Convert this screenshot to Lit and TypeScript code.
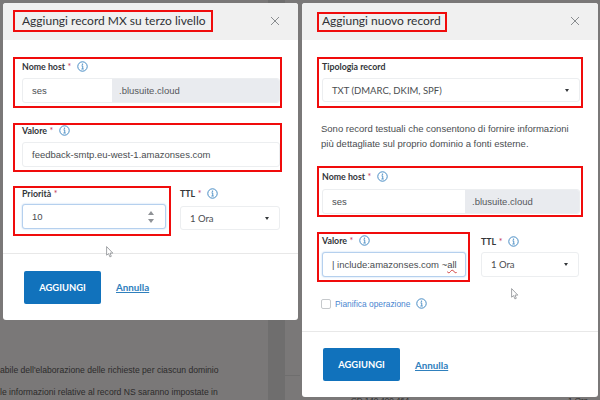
import { LitElement, html, css } from 'lit';
import { customElement } from 'lit/decorators.js';

const info = html`<svg class="info" viewBox="0 0 14 14" width="11" height="11">
  <circle cx="7" cy="7" r="6" fill="none" stroke="#3d85c0" stroke-width="1.2"></circle>
  <circle cx="7" cy="4" r="0.9" fill="#3d85c0"></circle>
  <path d="M5.7 6.2H7.3V10M5.6 10.2H8.6" fill="none" stroke="#3d85c0" stroke-width="1.1"></path>
</svg>`;

const close = html`<svg class="close" viewBox="0 0 10 10" width="10" height="10">
  <path d="M1 1L9 9M9 1L1 9" stroke="#8a8d90" stroke-width="1" fill="none"></path>
</svg>`;

const cursor = html`<svg viewBox="0 0 8 12" width="8" height="12">
  <path d="M.6.6V9.2L2.6 7.6L3.9 10.9L5.3 10.3L4 7.1H6.8Z" fill="#fff" stroke="#7b7e82" stroke-width=".7"></path>
</svg>`;

const AMP = html`<b>*</b>`;

@customElement('app-root')
export class AppRoot extends LitElement {
  static styles = css`
    :host {
      display: grid;
      grid-template-columns: 300px 300px;
      width: 600px;
      height: 400px;
      overflow: hidden;
      font-family: 'Liberation Sans', Arial, sans-serif;
      color: #3c3f42;
    }
    .shot {
      position: relative;
      height: 400px;
      overflow: hidden;
      background: #7a7878;
      box-sizing: border-box;
    }
    .left {
      padding: 3px 2px 0 3px;
    }
    .right {
      padding: 3px 2px 0 2px;
    }
    .band {
      position: absolute;
      top: 0;
      bottom: 0;
      left: 268px;
      width: 17px;
      background: #6f6e6e;
    }
    .rule {
      position: absolute;
      left: 285px;
      right: 0;
      top: 375px;
      height: 1px;
      background: #6f6e6e;
    }
    .modal {
      position: relative;
      background: #fff;
      border-radius: 3px;
      display: flex;
      flex-direction: column;
    }
    .left .modal {
      height: 317px;
    }
    .right .modal {
      height: 394px;
    }
    .head {
      height: 37px;
      flex: none;
      background: #f0f0f0;
      border-radius: 3px 3px 0 0;
      display: flex;
      align-items: flex-start;
      justify-content: space-between;
      padding-right: 18px;
      box-sizing: border-box;
    }
    .left .head {
      padding-left: 10px;
    }
    .right .head {
      padding-left: 15px;
    }
    .close {
      margin-top: 13px;
    }
    .title {
      font-family: Lato, sans-serif;
      font-size: 12px;
      color: #2f3236;
      border: 2px solid #f00c0c;
      box-sizing: border-box;
      white-space: nowrap;
    }
    .left .title {
      margin-top: 7px;
      height: 22px;
      line-height: 18px;
      width: 200px;
      padding-left: 7px;
    }
    .right .title {
      margin-top: 9px;
      height: 20px;
      line-height: 14px;
      padding: 0 4px 2px 3px;
    }
    .body {
      flex: 1;
      padding-top: 17px;
      display: flex;
      flex-direction: column;
      min-height: 0;
    }
    .left .body {
      padding-left: 10px;
      padding-right: 16px;
    }
    .right .body {
      padding-left: 15px;
      padding-right: 15px;
    }
    .mark {
      border: 2px solid #f00c0c;
      box-sizing: border-box;
      padding-bottom: 3px;
    }
    .left .mark {
      padding-left: 7px;
    }
    .right .mark {
      padding-left: 3px;
      padding-right: 1px;
    }
    .gap {
      margin-top: 15px;
    }
    label {
      display: flex;
      align-items: center;
      height: 10px;
      margin-bottom: 7px;
      font-family: Lato, sans-serif;
      font-weight: 700;
      font-size: 8.8px;
      color: #33363a;
      white-space: nowrap;
    }
    label b {
      color: #c4365a;
      font-weight: 400;
      margin-left: 2.5px;
    }
    label .info {
      margin-left: 6px;
    }
    .control {
      height: 25px;
      border: 1px solid #eceef0;
      border-radius: 3px;
      box-sizing: border-box;
      background: #fff;
      display: flex;
      align-items: center;
      font-size: 9.5px;
      color: #4a4d50;
      padding-left: 9px;
      white-space: nowrap;
      overflow: hidden;
    }
    .control.select {
      font-family: Lato, sans-serif;
      justify-content: space-between;
      padding-right: 10px;
    }
    .control.focus {
      border-color: #b5d0ee;
      box-shadow: 0 0 2px #b5d0ee;
    }
    .control.split {
      padding-left: 0;
    }
    .host {
      flex: none;
      padding-left: 9px;
      box-sizing: border-box;
    }
    .left .host {
      width: 89px;
    }
    .right .host {
      width: 142px;
    }
    .suffix {
      flex: 1;
      align-self: stretch;
      display: flex;
      align-items: center;
      background: #e9ebef;
      padding-left: 7px;
      color: #55585c;
    }
    .caret {
      width: 0;
      height: 0;
      border-left: 2.5px solid transparent;
      border-right: 2.5px solid transparent;
      border-top: 3px solid #33363a;
    }
    .spin {
      display: flex;
      flex-direction: column;
      gap: 4px;
      margin-right: 11px;
      margin-left: auto;
    }
    .spin i {
      width: 0;
      height: 0;
      border-left: 3px solid transparent;
      border-right: 3px solid transparent;
    }
    .spin i:first-child {
      border-bottom: 4px solid #8f9296;
    }
    .spin i:last-child {
      border-top: 4px solid #8f9296;
    }
    .row {
      display: flex;
      align-items: flex-start;
    }
    .left .first {
      padding-top: 2px;
    }
    .left .row {
      margin-top: 14px;
    }
    .left .row .mark {
      width: 158px;
      padding-right: 3px;
      padding-bottom: 5px;
    }
    .left .row .mark label {
      margin-bottom: 6px;
    }
    .ttl {
      flex: none;
    }
    .left .ttl {
      margin-left: 9px;
      width: 100px;
      padding-top: 2px;
    }
    .left .ttl label {
      margin-bottom: 8px;
    }
    .left .ttl .control {
      height: 24px;
    }
    .right .type {
      padding-top: 2px;
      padding-bottom: 4px;
    }
    .right .type .control {
      height: 24px;
    }
    .note {
      margin: 13px 0 15px 4px;
      font-size: 9.5px;
      line-height: 15px;
      color: #4a4d50;
      white-space: nowrap;
    }
    .right .host-field {
      padding-top: 3px;
      padding-bottom: 1px;
    }
    .right .host-field label {
      margin-bottom: 8px;
    }
    .right .row {
      margin-top: 15px;
    }
    .right .row .mark {
      width: 153px;
      padding-top: 1px;
      padding-right: 2px;
    }
    .right .ttl {
      margin-left: 11px;
      width: 98px;
      padding-top: 4px;
    }
    .right .ttl label {
      margin-bottom: 6px;
    }
    .check {
      display: flex;
      align-items: center;
      margin: 16px 0 0 4px;
      font-size: 8.4px;
      color: #4a86d0;
    }
    .box {
      width: 10px;
      height: 10px;
      box-sizing: border-box;
      border: 1px solid #c6c9cc;
      border-radius: 2px;
      margin-right: 4px;
    }
    .check .info {
      margin-left: 6px;
    }
    .foot {
      flex: none;
      height: 67px;
      box-sizing: border-box;
      border-top: 1px solid #e8e8e8;
      display: flex;
      align-items: center;
      gap: 15px;
      padding-left: 21px;
    }
    .right .foot {
      height: 66px;
    }
    .btn {
      width: 77px;
      height: 33px;
      background: #1172bc;
      border-radius: 2px;
      color: #fff;
      font-family: Lato, sans-serif;
      font-weight: 700;
      font-size: 9.4px;
      display: flex;
      align-items: center;
      justify-content: center;
    }
    .link {
      font-family: Lato, sans-serif;
      font-weight: 700;
      font-size: 9.8px;
      color: #2f80bd;
      text-decoration: underline;
    }
    .under {
      position: relative;
      font-size: 8.6px;
      color: #2c2b2b;
      white-space: nowrap;
      line-height: 12px;
      margin: 44px 0 0 -3px;
    }
    .under + .under {
      margin-top: 10px;
    }
    .pointer {
      position: absolute;
      line-height: 0;
    }
    .p1 {
      left: 106px;
      top: 246px;
    }
    .p2 {
      left: 211px;
      top: 288px;
    }
    .squiggle {
      text-decoration: underline wavy #d04040 1px;
    }
    .peek {
      position: relative;
      display: flex;
      justify-content: space-between;
      height: 12px;
      line-height: 10px;
      margin-top: -1px;
      padding: 0 10px 0 49px;
      font-size: 8px;
      color: #2c2b2b;
    }
  `;

  suffixField(host: string, cls: string) {
    return html`<div class="mark ${cls}">
      <label>Nome host ${AMP} ${info}</label>
      <div class="control split">
        <span class="host">${host}</span><span class="suffix">.blusuite.cloud</span>
      </div>
    </div>`;
  }

  footer() {
    return html`<div class="foot">
      <span class="btn">AGGIUNGI</span><span class="link">Annulla</span>
    </div>`;
  }

  render() {
    return html`
      <div class="shot left">
        <div class="band"></div>
        <div class="rule"></div>
        <div class="modal">
          <div class="head">
            <span class="title">Aggiungi record MX su terzo livello</span>${close}
          </div>
          <div class="body">
            ${this.suffixField('ses', 'first')}
            <div class="mark gap">
              <label>Valore ${AMP} ${info}</label>
              <div class="control">feedback-smtp.eu-west-1.amazonses.com</div>
            </div>
            <div class="row">
              <div class="mark">
                <label>Priorità ${AMP}</label>
                <div class="control focus">10<span class="spin"><i></i><i></i></span></div>
              </div>
              <div class="ttl">
                <label>TTL ${AMP} ${info}</label>
                <div class="control select">1 Ora<span class="caret"></span></div>
              </div>
            </div>
          </div>
          ${this.footer()}
        </div>
        <div class="under">abile dell'elaborazione delle richieste per ciascun dominio</div>
        <div class="under">le informazioni relative al record NS saranno impostate in</div>
        <div class="pointer p1">${cursor}</div>
      </div>
      <div class="shot right">
        <div class="modal">
          <div class="head">
            <span class="title">Aggiungi nuovo record</span>${close}
          </div>
          <div class="body">
            <div class="mark type">
              <label>Tipologia record</label>
              <div class="control select">TXT (DMARC, DKIM, SPF)<span class="caret"></span></div>
            </div>
            <div class="note">
              Sono record testuali che consentono di fornire informazioni<br />
              più dettagliate sul proprio dominio a fonti esterne.
            </div>
            ${this.suffixField('ses', 'host-field')}
            <div class="row">
              <div class="mark">
                <label>Valore ${AMP} ${info}</label>
                <div class="control focus">| include:amazonses.com ~<span class="squiggle">all</span></div>
              </div>
              <div class="ttl">
                <label>TTL ${AMP} ${info}</label>
                <div class="control select">1 Ora<span class="caret"></span></div>
              </div>
            </div>
            <div class="check">
              <span class="box"></span>Pianifica operazione ${info}
            </div>
          </div>
          ${this.footer()}
        </div>
        <div class="peek"><span>CD 140 400 464</span><span>1 Ora</span></div>
        <div class="pointer p2">${cursor}</div>
      </div>
    `;
  }
}
